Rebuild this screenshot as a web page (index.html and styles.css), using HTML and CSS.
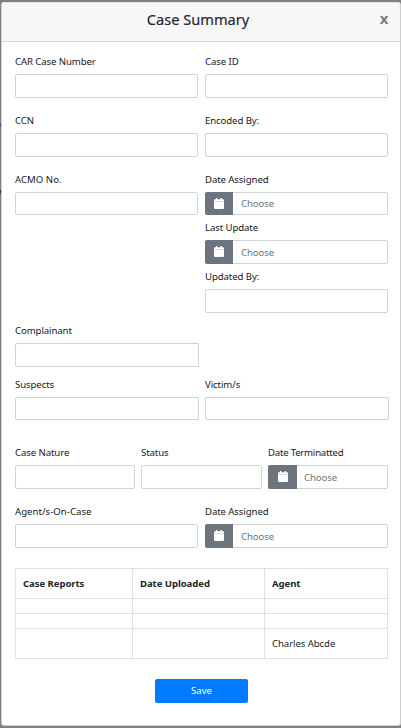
FILE: index.html
```html
<!DOCTYPE html>
<html lang="en">
<head>
<meta charset="utf-8">
<title>Case Summary</title>
<link rel="stylesheet" href="styles.css">
</head>
<body>
<svg width="0" height="0" class="defs"><symbol id="cal" viewBox="0 0 10 11"><path d="M0 3V2.2Q0 1.3 1 1.3H2V0H3.4V1.3H6.6V0H8V1.3H9Q10 1.3 10 2.2V3ZM0 3.2H10V10Q10 11 9 11H1Q0 11 0 10Z" fill="#fff"/></symbol></svg>
<div class="modal">
  <header class="modal-header">
    <h1 class="title">Case Summary</h1>
    <button class="close" type="button">x</button>
  </header>
  <form class="modal-body">
    <div class="row"><div class="field"><label>CAR Case Number</label><div class="input"></div></div><div class="field"><label>Case ID</label><div class="input"></div></div></div>
    <div class="row"><div class="field"><label>CCN</label><div class="input"></div></div><div class="field"><label>Encoded By:</label><div class="input"></div></div></div>
    <div class="row updates">
      <div class="field"><label class="loose">ACMO No.</label><div class="input short"></div></div>
      <div class="stack">
        <div class="field"><label>Date Assigned</label><div class="input date short"><span class="addon"><svg><use href="#cal"/></svg></span><span class="hint">Choose</span></div></div>
        <div class="field"><label>Last Update</label><div class="input date"><span class="addon"><svg><use href="#cal"/></svg></span><span class="hint">Choose</span></div></div>
        <div class="field"><label>Updated By:</label><div class="input"></div></div>
      </div>
    </div>
    <div class="row people"><div class="field"><label>Complainant</label><div class="input open"></div></div></div>
    <div class="row parties"><div class="field"><label>Suspects</label><div class="input open short"></div></div><div class="field"><label>Victim/s</label><div class="input open short"></div></div></div>
    <div class="row thirds">
      <div class="field"><label>Case Nature</label><div class="input"></div></div>
      <div class="field"><label>Status</label><div class="input"></div></div>
      <div class="field"><label class="tight">Date Terminatted</label><div class="input date"><span class="addon wide"><svg><use href="#cal"/></svg></span><span class="hint">Choose</span></div></div>
    </div>
    <div class="row agents"><div class="field"><label class="loose">Agent/s-On-Case</label><div class="input"></div></div><div class="field"><label>Date Assigned</label><div class="input date"><span class="addon"><svg><use href="#cal"/></svg></span><span class="hint">Choose</span></div></div></div>
    <table class="reports">
      <colgroup><col class="c1"><col class="c2"><col class="c3"></colgroup>
      <thead><tr><th>Case Reports</th><th>Date Uploaded</th><th>Agent</th></tr></thead>
      <tbody>
        <tr class="blank"><td></td><td></td><td></td></tr>
        <tr class="blank"><td></td><td></td><td></td></tr>
        <tr><td></td><td></td><td>Charles Abcde</td></tr>
      </tbody>
    </table>
    <button class="save" type="button">Save</button>
  </form>
</div>
</body>
</html>
```
FILE: styles.css
```css
* { box-sizing: border-box; }
body {
  margin: 0;
  height: 728px;
  padding: 2px 0 2px 1px;
  overflow: hidden;
  background:
    linear-gradient(#2f5f8c, #2f5f8c) 0 123px / 1px 4px no-repeat,
    linear-gradient(#1c2b55 50%, #8c6a3c 50%) 0 190px / 1px 6px no-repeat,
    #808080;
  font-family: "Noto Sans", "Open Sans", sans-serif;
  font-size: 9.6px;
  letter-spacing: -0.08px;
  color: #212529;
}
.defs { position: absolute; }
.modal {
  width: 400px;
  height: 724px;
  background: #fff;
  border: 1px solid #cfcfcf;
  border-top-color: #e4e4e4;
  border-radius: 3px;
  overflow: hidden;
}
.modal-header {
  display: grid;
  grid-template-columns: 26px 1fr 32px;
  align-items: center;
  height: 39px;
  background: #f7f7f7;
  border-bottom: 1px solid #d5d6d8;
}
.title {
  grid-column: 2;
  margin: 0;
  text-align: center;
  font-size: 14.6px;
  font-weight: 400;
  letter-spacing: 0;
  line-height: 20px;
  padding-bottom: 6px;
  -webkit-text-stroke: 0.15px #212529;
}
.close {
  border: 0;
  padding: 0 0 8px;
  background: none;
  font: 700 15px/18px "Noto Sans", sans-serif;
  color: #7b7b7b;
}
.modal-body { padding: 12px 12px 0 13px; }
.row {
  display: grid;
  grid-template-columns: 183px 183px;
  column-gap: 7px;
  height: 59px;
}
.updates { height: 151px; }
.people { height: 54px; }
.people, .parties { grid-template-columns: 184px 184px; column-gap: 6px; }
.parties { height: 68px; }
.thirds { grid-template-columns: 120px 121px 120px; column-gap: 6px; }
.agents { height: 64px; }
.stack { display: flex; flex-direction: column; }
.stack .field { margin-bottom: 5px; }
label {
  display: block;
  height: 20px;
  line-height: 15px;
  letter-spacing: -0.09px;
  white-space: nowrap;
  color: #16191c;
}
.tight { letter-spacing: -0.21px; }
.loose { letter-spacing: 0.03px; }
.input {
  height: 24px;
  border: 1px solid #ced4da;
  border-radius: 2px;
  background: #fff;
}
.short { height: 23px; }
.open { border-radius: 2px 0 0 2px; }
.date { display: flex; align-items: stretch; }
.addon {
  display: flex;
  justify-content: center;
  align-items: center;
  width: 28px;
  margin: -1px 0 -1px -1px;
  background: #6c757d;
  border-radius: 2px 0 0 2px;
}
.wide { width: 29px; }
.addon svg { width: 10px; height: 11px; margin-bottom: 1px; }
.hint { padding-left: 8px; line-height: 23px; color: #6c757d; }
.wide + .hint { padding-left: 7px; }
.short .hint { line-height: 22px; }
.reports {
  width: 373px;
  table-layout: fixed;
  border-collapse: collapse;
}
.c1 { width: 117px; }
.c2 { width: 132px; }
.c3 { width: 123px; }
.reports th, .reports td {
  height: 30px;
  padding: 0 7px;
  border: 1px solid #dee2e6;
  text-align: left;
  line-height: 14px;
}
.reports .blank td { height: 15px; }
.save {
  display: block;
  width: 93px;
  height: 24px;
  margin: 20px 0 0 140px;
  padding: 0 0 1px;
  border: 0;
  border-radius: 2px;
  background: #007bff;
  color: #fff;
  font: inherit;
}
```
